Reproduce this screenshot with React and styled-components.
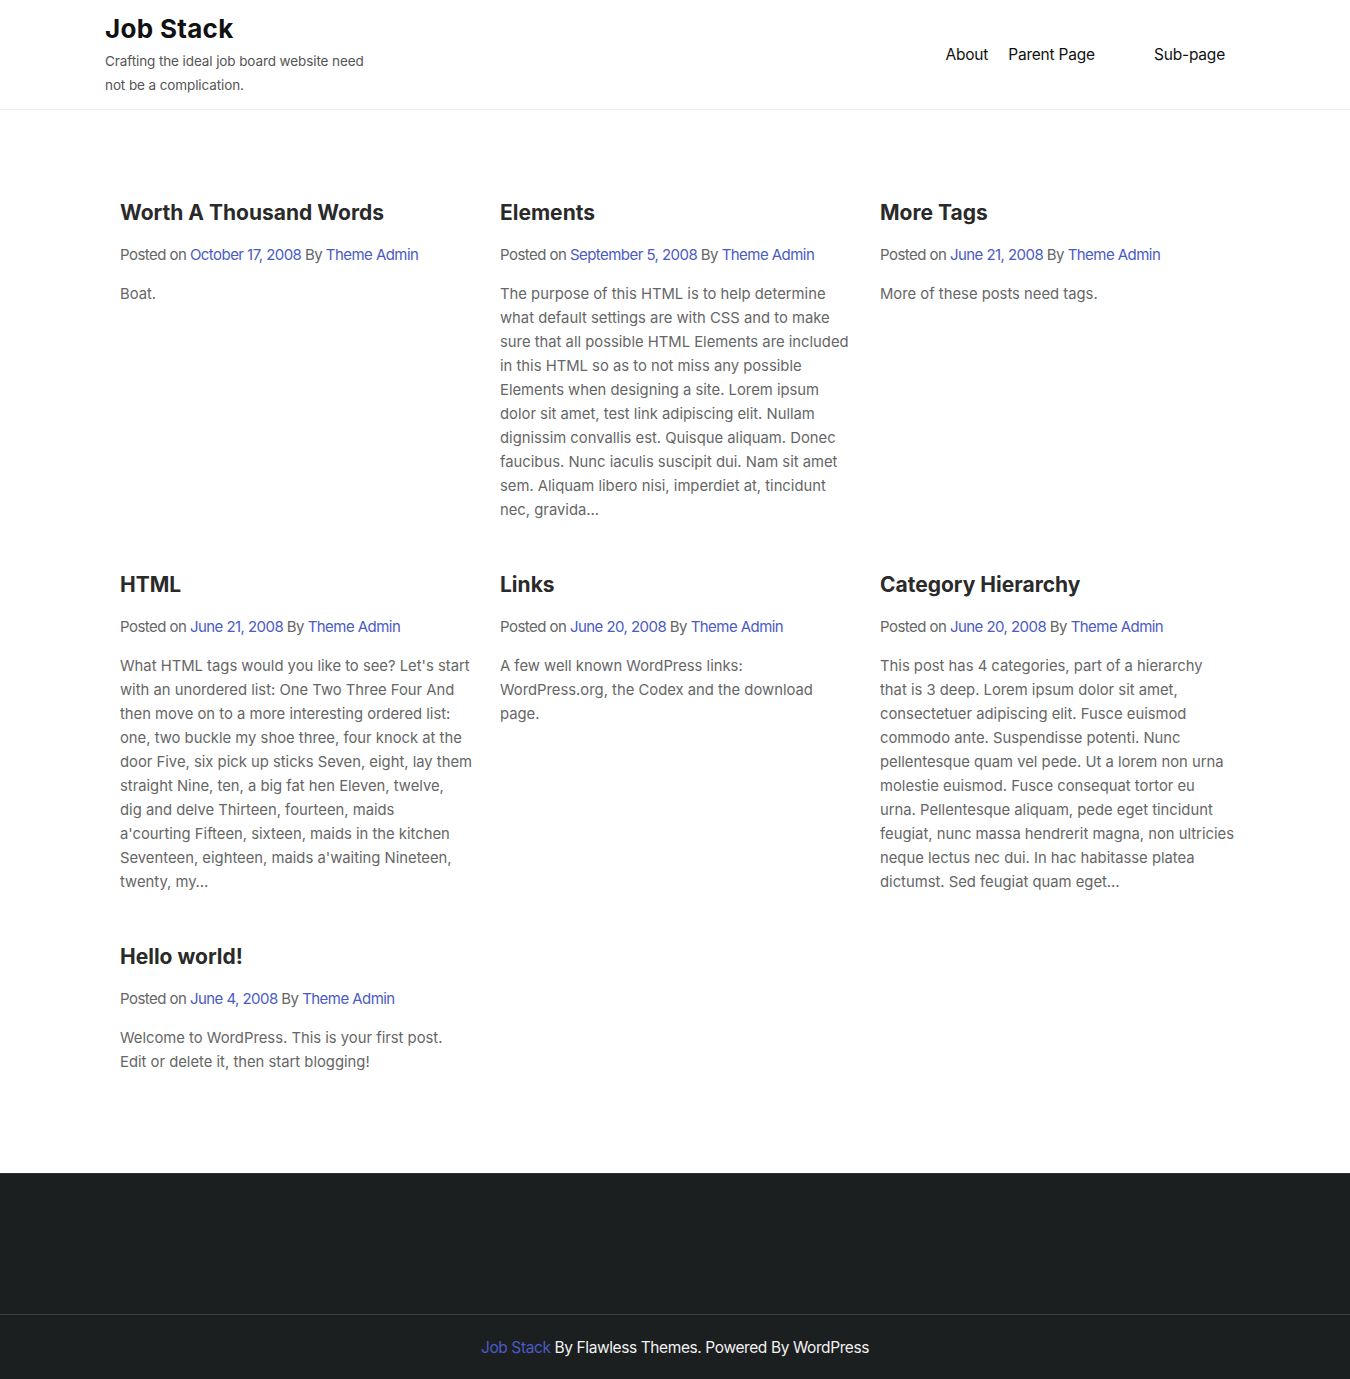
import styled, { createGlobalStyle } from "styled-components";

const GlobalStyle = createGlobalStyle`
  * { box-sizing: border-box; }
  body {
    margin: 0;
    background: #fff;
    font-family: Inter, "Noto Sans", sans-serif;
    color: #666;
  }
  a { text-decoration: none; }
`;

const Header = styled.header`
  border-bottom: 1px solid #ececec;
`;

const HeaderInner = styled.div`
  width: 1140px;
  margin: 0 auto;
  display: flex;
  justify-content: space-between;
  align-items: flex-start;
  padding: 12px 0 12px;
`;

const Branding = styled.div`
  width: 275px;
`;

const SiteTitle = styled.h1`
  margin: 0 0 3px;
  font-family: Inter, sans-serif;
  font-size: 26px;
  font-weight: 700;
  line-height: 34px;
  color: #111;
  letter-spacing: 0.3px;
`;

const Tagline = styled.p`
  margin: 0;
  font-size: 13.5px;
  line-height: 24px;
  color: #555;
  letter-spacing: -0.1px;
`;

const Nav = styled.nav`
  display: flex;
  gap: 20px;
  padding-top: 33px;
  padding-right: 20px;
`;

const NavItem = styled.a`
  font-size: 15.5px;
  color: #111;
  letter-spacing: -0.2px;
  margin-left: ${(p) => (p.$sub ? "39px" : "0")};
`;

const Main = styled.main`
  width: 1140px;
  margin: 0 auto;
  padding: 88px 0 99px;
  display: grid;
  grid-template-columns: repeat(3, minmax(0, 1fr));
  row-gap: 48px;
`;

const Post = styled.article`
  padding: 0 15px;
`;

const PostTitle = styled.h2`
  margin: 0 0 16px;
  font-family: Inter, sans-serif;
  font-size: 21px;
  font-weight: 700;
  line-height: 29px;
  color: #2a2a2a;
  letter-spacing: 0;
`;

const Meta = styled.div`
  font-size: 15px;
  line-height: 24px;
  color: #666;
  letter-spacing: -0.55px;
  margin-bottom: 15px;
`;

const MetaLink = styled.a`
  color: #4a5bc4;
`;

const Excerpt = styled.p`
  margin: 0;
  font-size: 14.8px;
  line-height: 24px;
  color: #666;
  letter-spacing: 0;
`;

const Line = styled.span`
  display: block;
  white-space: nowrap;
`;

const Footer = styled.footer`
  background: #1c1f20;
`;

const FooterWidgets = styled.div`
  height: 142px;
  border-top: 1px solid #2e3233;
  border-bottom: 1px solid #3d4142;
`;

const FooterBar = styled.div`
  height: 64px;
  display: flex;
  align-items: center;
  justify-content: center;
  font-size: 15.5px;
  color: #f2f2f2;
  letter-spacing: -0.4px;
`;

const FooterLink = styled.a`
  color: #4a5bc4;
  margin-right: 4px;
`;

// excerpt lines kept as the theme wraps them
const posts = [
  {
    title: "Worth A Thousand Words",
    date: "October 17, 2008",
    lines: ["Boat."],
  },
  {
    title: "Elements",
    date: "September 5, 2008",
    lines: [
      "The purpose of this HTML is to help determine",
      "what default settings are with CSS and to make",
      "sure that all possible HTML Elements are included",
      "in this HTML so as to not miss any possible",
      "Elements when designing a site. Lorem ipsum",
      "dolor sit amet, test link adipiscing elit. Nullam",
      "dignissim convallis est. Quisque aliquam. Donec",
      "faucibus. Nunc iaculis suscipit dui. Nam sit amet",
      "sem. Aliquam libero nisi, imperdiet at, tincidunt",
      "nec, gravida\u2026",
    ],
  },
  {
    title: "More Tags",
    date: "June 21, 2008",
    lines: ["More of these posts need tags."],
  },
  {
    title: "HTML",
    date: "June 21, 2008",
    lines: [
      "What HTML tags would you like to see? Let's start",
      "with an unordered list: One Two Three Four And",
      "then move on to a more interesting ordered list:",
      "one, two buckle my shoe three, four knock at the",
      "door Five, six pick up sticks Seven, eight, lay them",
      "straight Nine, ten, a big fat hen Eleven, twelve,",
      "dig and delve Thirteen, fourteen, maids",
      "a'courting Fifteen, sixteen, maids in the kitchen",
      "Seventeen, eighteen, maids a'waiting Nineteen,",
      "twenty, my\u2026",
    ],
  },
  {
    title: "Links",
    date: "June 20, 2008",
    lines: [
      "A few well known WordPress links:",
      "WordPress.org, the Codex and the download",
      "page.",
    ],
  },
  {
    title: "Category Hierarchy",
    date: "June 20, 2008",
    lines: [
      "This post has 4 categories, part of a hierarchy",
      "that is 3 deep. Lorem ipsum dolor sit amet,",
      "consectetuer adipiscing elit. Fusce euismod",
      "commodo ante. Suspendisse potenti. Nunc",
      "pellentesque quam vel pede. Ut a lorem non urna",
      "molestie euismod. Fusce consequat tortor eu",
      "urna. Pellentesque aliquam, pede eget tincidunt",
      "feugiat, nunc massa hendrerit magna, non ultricies",
      "neque lectus nec dui. In hac habitasse platea",
      "dictumst. Sed feugiat quam eget\u2026",
    ],
  },
  {
    title: "Hello world!",
    date: "June 4, 2008",
    lines: [
      "Welcome to WordPress. This is your first post.",
      "Edit or delete it, then start blogging!",
    ],
  },
];

const App = () => {
  return (
    <>
      <GlobalStyle />
      <Header>
        <HeaderInner>
          <Branding>
            <SiteTitle>Job Stack</SiteTitle>
            <Tagline>
              Crafting the ideal job board website need not be a complication.
            </Tagline>
          </Branding>
          <Nav>
            <NavItem href="#">About</NavItem>
            <NavItem href="#">Parent Page</NavItem>
            <NavItem href="#" $sub>
              Sub-page
            </NavItem>
          </Nav>
        </HeaderInner>
      </Header>
      <Main>
        {posts.map((post) => (
          <Post key={post.title}>
            <PostTitle>{post.title}</PostTitle>
            <Meta>
              Posted on <MetaLink href="#">{post.date}</MetaLink> By{" "}
              <MetaLink href="#">Theme Admin</MetaLink>
            </Meta>
            <Excerpt>
              {post.lines.map((line) => (
                <Line key={line}>{line}</Line>
              ))}
            </Excerpt>
          </Post>
        ))}
      </Main>
      <Footer>
        <FooterWidgets />
        <FooterBar>
          <FooterLink href="#">Job Stack</FooterLink> By Flawless Themes.
          Powered By WordPress
        </FooterBar>
      </Footer>
    </>
  );
};

export default App;
